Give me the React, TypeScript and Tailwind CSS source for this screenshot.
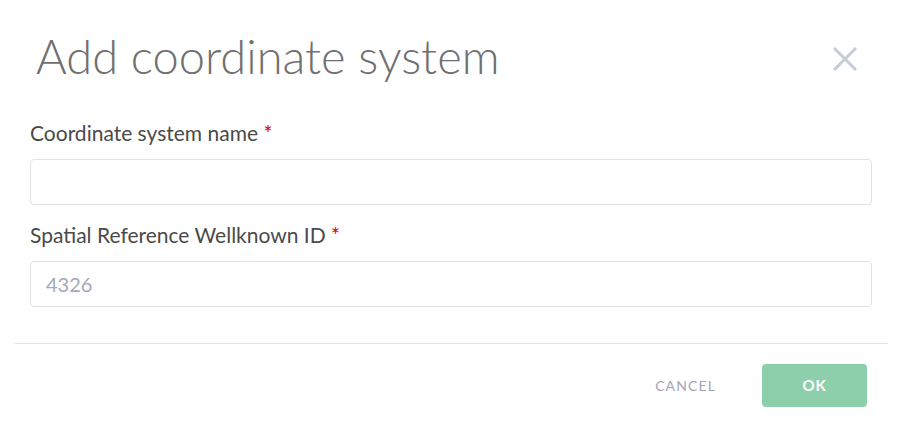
import React from "react";

function Field({ label, placeholder }: { label: string; placeholder?: string }) {
  return (
    <div className="flex flex-col">
      <label className="text-[21px] leading-[28px] text-[#4a4a4a]">
        {label} <span className="text-[#d0021b]">*</span>
      </label>
      <input
        placeholder={placeholder}
        className="mt-[12px] h-[46px] w-full rounded-[4px] border border-[#e2e2e2] bg-white px-[15px] text-[20px] text-[#4a4a4a] outline-none placeholder:text-[#a3a9b7]"
      />
    </div>
  );
}

export default function App() {
  return (
    <div className="h-[443px] w-full bg-white font-['Lato','Liberation_Sans',sans-serif]">
      <div className="flex items-start justify-between pl-[36px] pr-[46px] pt-[28px]">
        <h1 className="text-[47px] font-light leading-[56px] text-[#707070]">Add coordinate system</h1>
        <button className="mt-[19px] text-[#c5cdd8]">
          <svg width="24" height="24" viewBox="0 0 24 24" fill="none" stroke="currentColor" strokeWidth="3">
            <path d="M1 1L23 23M23 1L1 23" />
          </svg>
        </button>
      </div>
      <div className="mt-[35px] flex flex-col gap-[16px] pl-[30px] pr-[31px]">
        <Field label="Coordinate system name" />
        <Field label="Spatial Reference Wellknown ID" placeholder="4326" />
      </div>
      <div className="mx-[15px] mt-[36px] border-t border-[#e2e2e2]" />
      <div className="mt-[20px] flex items-center justify-end gap-[46px] pr-[36px]">
        <button className="text-[14px] tracking-[0.08em] text-[#a5a3b8]">CANCEL</button>
        <button className="h-[43px] w-[105px] rounded-[4px] bg-[#8dcfab] text-[15px] font-bold tracking-[0.05em] text-white">
          OK
        </button>
      </div>
    </div>
  );
}
